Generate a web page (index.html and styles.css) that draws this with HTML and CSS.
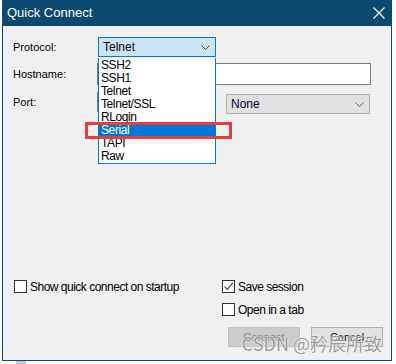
FILE: index.html
```html
<!DOCTYPE html>
<html lang="en">
  <head>
    <meta charset="UTF-8" />
    <title>Quick Connect</title>
    <link rel="stylesheet" href="styles.css">
  </head>
  <body>
    <div class="window">
      <div class="title-bar">
        <span class="title">Quick Connect</span>
        <svg class="close-icon" width="12" height="12" viewBox="0 0 12 12">
          <path d="M0.5 0.5 L11.5 11.5 M11.5 0.5 L0.5 11.5" stroke="#fff" stroke-width="1.2" fill="none" />
        </svg>
      </div>

      <div class="content">
        <!-- Protocol row with the open drop down -->
        <div class="row row-protocol">
          <label class="field-label">Protocol:</label>
          <div class="combo combo-active">
            <span>Telnet</span>
            <svg class="chevron" width="9" height="5" viewBox="0 0 9 5">
              <path d="M0.5 0.5 L4.5 4.5 L8.5 0.5" stroke="#404040" fill="none" />
            </svg>
            <ul class="dropdown">
              <li>SSH2</li>
              <li>SSH1</li>
              <li>Telnet</li>
              <li>Telnet/SSL</li>
              <li>RLogin</li>
              <li class="selected">Serial</li>
              <li>TAPI</li>
              <li>Raw</li>
            </ul>
          </div>
        </div>

        <div class="row row-hostname">
          <label class="field-label">Hostname:</label>
          <div class="text-input hostname-input"></div>
        </div>

        <div class="row row-port">
          <label class="field-label">Port:</label>
          <div class="text-input port-input"></div>
          <div class="combo combo-plain firewall">
            <span>None</span>
            <svg class="chevron" width="9" height="5" viewBox="0 0 9 5">
              <path d="M0.5 0.5 L4.5 4.5 L8.5 0.5" stroke="#606060" fill="none" />
            </svg>
          </div>
        </div>

        <div class="spacer"></div>

        <div class="options">
          <div class="check-item">
            <span class="box"></span>
            <span>Show quick connect on startup</span>
          </div>
          <div class="check-item">
            <span class="box">
              <svg width="11" height="11" viewBox="0 0 11 11">
                <path d="M1.5 5.5 L4.2 8.5 L9.8 1.8" stroke="#333" stroke-width="1.1" fill="none" />
              </svg>
            </span>
            <span>Save session</span>
          </div>
          <div></div>
          <div class="check-item">
            <span class="box"></span>
            <span>Open in a tab</span>
          </div>
        </div>

        <div class="buttons">
          <button class="btn btn-disabled">Connect</button>
          <button class="btn">Cancel</button>
        </div>
      </div>

      <!-- highlight drawn over the screenshot -->
      <div class="mark"></div>
      <div class="watermark">CSDN @矜辰所致</div>
    </div>
    <div class="under"></div>
  </body>
</html>
```

FILE: styles.css
```css
/* Basic reset */
body,
html {
  margin: 0;
  padding: 0;
  background-color: #ffffff;
}

body {
  font-family: "Liberation Sans", Arial, sans-serif;
  font-size: 11px;
  color: #000;
}

/* The dialog window */
.window {
  position: relative;
  box-sizing: border-box;
  width: 390px;
  height: 361px;
  margin-left: 2px;
  border: 1px solid #0b4a70;
  border-top: none;
  background-color: #f0f0f0;
  display: flex;
  flex-direction: column;
}

.title-bar {
  height: 26px;
  background-color: #0b4a70;
  display: flex;
  align-items: center;
  justify-content: space-between;
  padding: 0 6px 0 4px;
  flex-shrink: 0;
}

.title {
  font-size: 13px;
  color: #ffffff;
  margin-top: -1px;
}

/* Form area */
.content {
  flex: 1;
  display: flex;
  flex-direction: column;
  padding: 11px 0 13px 10px;
}

.row {
  display: flex;
  align-items: flex-start;
}

.field-label {
  width: 85px;
  flex-shrink: 0;
  line-height: 20px;
}

.row-hostname {
  margin-top: 6px;
}

.row-hostname .field-label {
  width: 84px;
  line-height: 22px;
}

.row-port {
  margin-top: 7px;
}

.row-port .field-label {
  width: 84px;
}

.combo {
  position: relative;
  box-sizing: border-box;
  height: 20px;
  display: flex;
  align-items: center;
  justify-content: space-between;
  padding: 0 5px 0 4px;
  font-size: 12px;
}

.combo-active {
  width: 118px;
  background-color: #cce4f7;
  border: 1px solid #0078d7;
}

.combo-plain {
  background-color: #e1e1e1;
  border: 1px solid #adadad;
}

.chevron {
  display: block;
}

.text-input {
  box-sizing: border-box;
  background-color: #ffffff;
  border: 1px solid #7a7a7a;
}

.hostname-input {
  width: 274px;
  height: 22px;
}

.port-input {
  width: 64px;
  height: 20px;
}

.firewall {
  width: 144px;
  margin-left: 65px;
  margin-top: 2px;
  color: #000033;
}

/* Open protocol list */
.dropdown {
  position: absolute;
  top: 20px;
  left: -1px;
  width: 118px;
  box-sizing: border-box;
  margin: 0;
  padding: 1px 0 0 0;
  list-style: none;
  background-color: #ffffff;
  border: 1px solid #0078d7;
  border-top: none;
  z-index: 2;
  color: #000;
}

.dropdown li {
  height: 13px;
  line-height: 13px;
  padding-left: 2px;
  font-size: 12px;
  letter-spacing: -0.4px;
}

.dropdown .selected {
  background-color: #0078d7;
  color: #ffffff;
}

.spacer {
  flex: 1;
}

/* Checkbox options */
.options {
  display: grid;
  grid-template-columns: 208px auto;
  row-gap: 10px;
  font-size: 12px;
  letter-spacing: -0.5px;
}

.check-item {
  display: flex;
  align-items: center;
  height: 13px;
}

.box {
  box-sizing: border-box;
  width: 13px;
  height: 13px;
  border: 1px solid #333333;
  background-color: #ffffff;
  margin-left: 1px;
  margin-right: 3px;
  display: flex;
  align-items: center;
  justify-content: center;
}

.box svg {
  display: block;
}

/* Dialog buttons */
.buttons {
  display: flex;
  justify-content: flex-end;
  gap: 11px;
  margin-top: 11px;
  padding-right: 8px;
}

.btn {
  box-sizing: border-box;
  width: 72px;
  height: 20px;
  font-family: "Liberation Sans", Arial, sans-serif;
  font-size: 11px;
  background-color: #e1e1e1;
  border: 1px solid #adadad;
  color: #000;
  padding: 0;
}

.btn-disabled {
  background-color: #cccccc;
  border-color: #bfbfbf;
  color: #838383;
}

/* Red rectangle drawn onto the screenshot */
.mark {
  position: absolute;
  left: 82px;
  top: 122px;
  width: 147px;
  height: 17px;
  box-sizing: border-box;
  border: 3px solid #ee3a3f;
  z-index: 3;
}

.watermark {
  position: absolute;
  right: 9px;
  bottom: 4px;
  font-family: "Noto Sans CJK SC", sans-serif;
  font-size: 18px;
  color: rgba(120, 120, 120, 0.75);
  text-shadow: 0 0 2px #ffffff, 0 0 1px #ffffff;
  z-index: 4;
}

.under {
  width: 10px;
  height: 3px;
  margin-left: 16px;
  background-color: #c8c8c8;
}
```
